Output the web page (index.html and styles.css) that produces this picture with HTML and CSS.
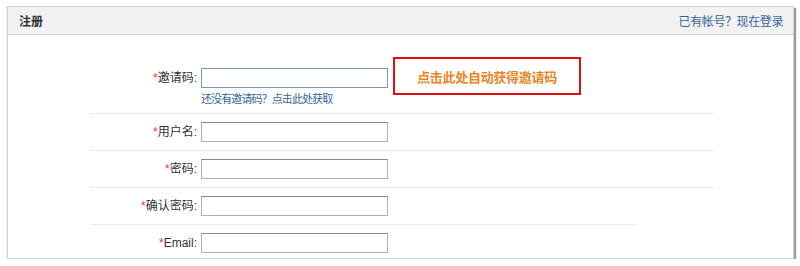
FILE: index.html
```html
<!DOCTYPE html>
<html lang="zh-CN">
<head>
    <meta charset="UTF-8">
    <title>注册</title>
    <link rel="stylesheet" href="styles.css">
</head>
<body>
    <div class="box">
        <div class="box-head">
            <span class="title">注册</span>
            <a class="login-link">已有帐号？现在登录</a>
        </div>
        <div class="form">
            <div class="row first">
                <label class="label"><em>*</em>邀请码:</label>
                <div class="field">
                    <input type="text" class="txt focus">
                    <a class="hint">还没有邀请码？点击此处获取</a>
                </div>
                <a class="get-code">点击此处自动获得邀请码</a>
            </div>
            <div class="row">
                <label class="label"><em>*</em>用户名:</label>
                <input type="text" class="txt">
            </div>
            <div class="row">
                <label class="label"><em>*</em>密码:</label>
                <input type="password" class="txt">
            </div>
            <div class="row short">
                <label class="label"><em>*</em>确认密码:</label>
                <input type="password" class="txt">
            </div>
            <div class="row last">
                <label class="label"><em>*</em>Email:</label>
                <input type="text" class="txt">
            </div>
        </div>
    </div>
</body>
</html>
```

FILE: styles.css
```css
body { margin: 0; background: #fff; font-family: "Liberation Sans", "Noto Sans CJK SC", sans-serif; font-size: 12px; color: #333; }
.box { margin: 6px 0 0 7px; width: 785px; height: 251px; border: 1px solid #d4d4d4; background: #fff; box-shadow: 2px 2px 1px #999, -1px 0 1px #eee; overflow: hidden; }
.box-head { height: 27px; background: #f2f2f2; border-bottom: 1px solid #d6d6d6; display: flex; align-items: center; justify-content: space-between; padding: 0 10px 0 11px; }
.title { font-weight: bold; color: #333; }
.login-link { color: #336699; text-decoration: none; letter-spacing: -0.4px; }
.form { padding-top: 22px; }
.row { margin-left: 83px; width: 622px; display: flex; align-items: flex-start; padding: 8px 0; border-bottom: 1px dotted #d8d8d8; }
.row.first { padding: 0 0 6px; }
.row.short { width: 545px; }
.row.last { border-bottom: none; }
.label { width: 106px; text-align: right; line-height: 20px; margin-right: 4px; color: #333; }
.label em { font-style: normal; color: #e33; }
.first .label { margin-top: 11px; }
.txt { box-sizing: border-box; width: 187px; height: 20px; margin: 0; padding: 0 3px; border: 1px solid #b0b0b0; border-top-color: #888; background: #fff; font-size: 12px; }
.txt.focus { border-color: #7a97b3; }
.field { margin-top: 11px; display: flex; flex-direction: column; }
.hint { margin-top: 3px; line-height: 16px; font-size: 11px; letter-spacing: -0.9px; color: #336699; text-decoration: none; }
.get-code { margin-left: 5px; box-sizing: border-box; width: 188px; height: 38px; border: 2px solid #e01010; display: flex; align-items: center; justify-content: center; color: #e8861f; font-weight: bold; font-size: 13px; letter-spacing: -0.3px; text-decoration: none; }
```
